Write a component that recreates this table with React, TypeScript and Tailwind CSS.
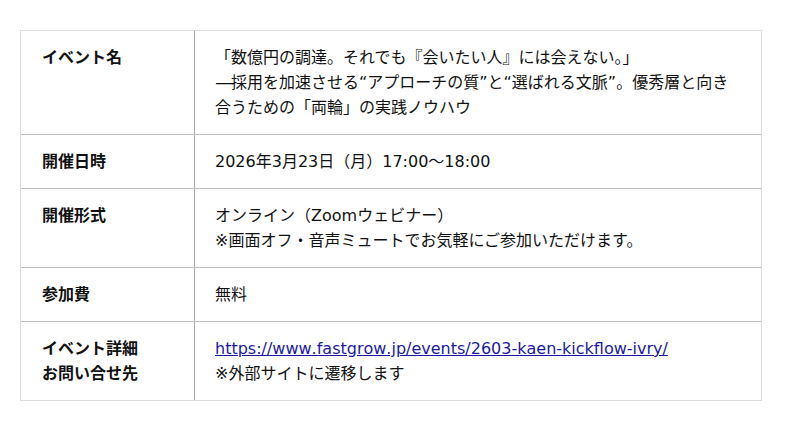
const rows: { label: string[]; value: React.ReactNode }[] = [
  {
    label: ["イベント名"],
    value: (
      <>
        「数億円の調達。それでも『会いたい人』には会えない。」
        <br />
        <span className="inline-block w-[16px] origin-left scale-x-[1.25]">—</span>
        採用を加速させる“アプローチの質”と“選ばれる文脈”。優秀層と向き合うための「両輪」の実践ノウハウ
      </>
    ),
  },
  { label: ["開催日時"], value: "2026年3月23日（月）17:00〜18:00" },
  {
    label: ["開催形式"],
    value: (
      <>
        オンライン（Zoomウェビナー）
        <br />
        ※画面オフ・音声ミュートでお気軽にご参加いただけます。
      </>
    ),
  },
  { label: ["参加費"], value: "無料" },
  {
    label: ["イベント詳細", "お問い合せ先"],
    value: (
      <>
        <a
          href="https://www.fastgrow.jp/events/2603-kaen-kickflow-ivry/"
          className="text-[#1a1aa6] underline [font-kerning:none]"
        >
          https://www.fastgrow.jp/events/2603-kaen-kickflow-ivry/
        </a>
        <br />
        ※外部サイトに遷移します
      </>
    ),
  },
];

export default function App() {
  return (
    <div
      className="min-h-[431px] bg-white pt-[30px] pl-[20px] text-[16px] leading-[25px] text-[#111]"
      style={{ fontFamily: '"DejaVu Sans", "Noto Sans CJK JP", sans-serif' }}
    >
      <div className="w-[742px] border border-[#dcdcdc]">
        {rows.map((row, i) => (
          <div
            key={i}
            className={`grid grid-cols-[174px_1fr] ${i > 0 ? "border-t border-[#bdbdbd]" : ""}`}
          >
            <div className="border-r border-[#a8a8a8] py-[14px] pl-[21px] font-bold">
              {row.label.map((l, j) => (
                <div key={j}>{l}</div>
              ))}
            </div>
            <div className="py-[14px] pl-[20px] pr-[20px]">{row.value}</div>
          </div>
        ))}
      </div>
    </div>
  );
}
